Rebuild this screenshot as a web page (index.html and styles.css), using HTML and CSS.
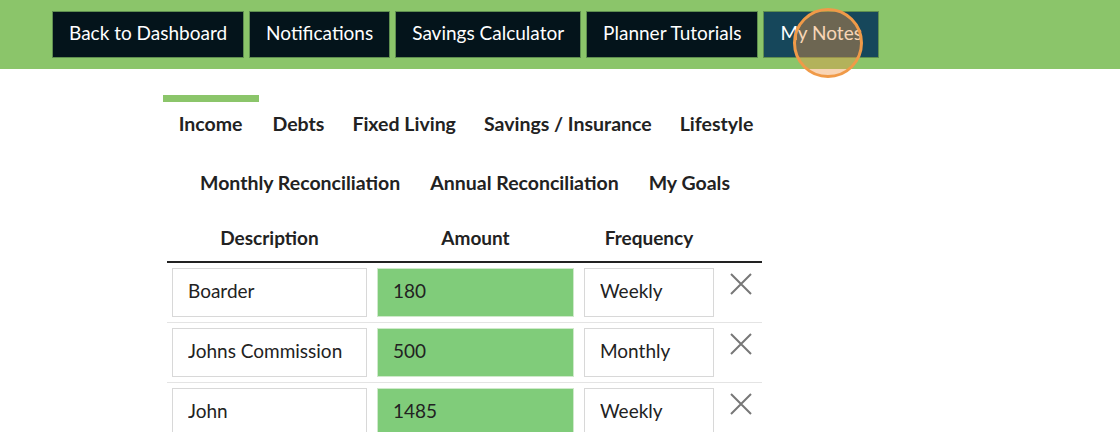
FILE: index.html
```html
<!DOCTYPE html>
<html lang="en">
<head>
    <meta charset="UTF-8">
    <meta name="viewport" content="width=device-width, initial-scale=1.0">
    <title>Budget Planner - Income</title>
    <link rel="stylesheet" href="styles.css">
</head>
<body>

<div class="topbar">
    <a class="top-btn" href="#">Back to Dashboard</a>
    <a class="top-btn" href="#">Notifications</a>
    <a class="top-btn" href="#">Savings Calculator</a>
    <a class="top-btn" href="#">Planner Tutorials</a>
    <a class="top-btn active" href="#">My Notes</a>
    <span class="click-mark"></span>
</div>

<div class="planner">
    <div class="tabs">
        <ul class="tab-row first">
            <li class="tab current">Income</li>
            <li class="tab">Debts</li>
            <li class="tab">Fixed Living</li>
            <li class="tab">Savings / Insurance</li>
            <li class="tab">Lifestyle</li>
        </ul>
        <ul class="tab-row">
            <li class="tab">Monthly Reconciliation</li>
            <li class="tab">Annual Reconciliation</li>
            <li class="tab">My Goals</li>
        </ul>
    </div>

    <table class="items">
        <thead>
            <tr>
                <th class="col-desc">Description</th>
                <th class="col-amount">Amount</th>
                <th class="col-freq">Frequency</th>
                <th class="col-del"></th>
            </tr>
        </thead>
        <tbody>
            <tr>
                <td><input class="field" type="text" value="Boarder"></td>
                <td><input class="field amount" type="text" value="180"></td>
                <td><input class="field" type="text" value="Weekly"></td>
                <td class="del"><svg viewBox="0 0 24 24" width="24" height="24"><path d="M2 2 L22 22 M22 2 L2 22"/></svg></td>
            </tr>
            <tr>
                <td><input class="field" type="text" value="Johns Commission"></td>
                <td><input class="field amount" type="text" value="500"></td>
                <td><input class="field" type="text" value="Monthly"></td>
                <td class="del"><svg viewBox="0 0 24 24" width="24" height="24"><path d="M2 2 L22 22 M22 2 L2 22"/></svg></td>
            </tr>
            <tr>
                <td><input class="field" type="text" value="John"></td>
                <td><input class="field amount" type="text" value="1485"></td>
                <td><input class="field" type="text" value="Weekly"></td>
                <td class="del"><svg viewBox="0 0 24 24" width="24" height="24"><path d="M2 2 L22 22 M22 2 L2 22"/></svg></td>
            </tr>
        </tbody>
    </table>
</div>

</body>
</html>
```

FILE: styles.css
```css
body {
    margin: 0;
    font-family: Lato, "Open Sans", sans-serif;
    color: #222;
    background: #fff;
}
.topbar {
    position: relative;
    display: flex;
    gap: 5px;
    height: 69px;
    padding: 11px 0 0 52px;
    box-sizing: border-box;
    background: #8bc56a;
}
.top-btn {
    display: flex;
    align-items: center;
    height: 47px;
    padding: 0 16px 4px;
    box-sizing: border-box;
    background: #04141b;
    border: 1px solid #5f8f50;
    color: #fff;
    font-size: 19px;
    text-decoration: none;
}
.top-btn.active {
    background: #16475b;
}
.click-mark {
    position: absolute;
    left: 793px;
    top: 8px;
    width: 64px;
    height: 64px;
    border: 3px solid #f09a48;
    border-radius: 50%;
    background: rgba(240, 150, 70, 0.4);
}
.planner {
    width: 604px;
    margin-left: 163px;
    padding-top: 26px;
}
.tab-row {
    display: flex;
    justify-content: center;
    list-style: none;
    margin: 0;
    padding: 0;
    white-space: nowrap;
}
.tab {
    flex: none;
    padding: 0 15px 8px;
    height: 59px;
    line-height: 44px;
    box-sizing: border-box;
    border-top: 7px solid transparent;
    font-size: 19.5px;
    font-weight: bold;
    color: #222;
}
.tab-row.first .tab {
    padding: 0 14px 8px;
}
.tab-row.first .tab.current {
    padding: 0 16px 8px;
    border-top-color: #8bc56a;
}
.items {
    width: 595px;
    margin: 0 0 0 4px;
    border-collapse: collapse;
}
.items th {
    height: 48px;
    padding: 0;
    font-size: 19px;
    font-weight: bold;
    text-align: center;
    vertical-align: middle;
    border-bottom: 2px solid #222;
}
.col-desc { width: 205px; }
.col-amount { width: 207px; }
.col-freq { width: 140px; }
.items td {
    padding: 5px;
    border-bottom: 1px solid #e4e4e4;
    vertical-align: top;
}
.field {
    display: block;
    width: 100%;
    height: 49px;
    box-sizing: border-box;
    padding: 0 15px 4px;
    border: 1px solid #d8d8d8;
    font-family: Lato, sans-serif;
    font-size: 19px;
    color: #222;
    background: #fff;
}
.field.amount {
    background: #80cc7a;
    border-color: #cfe9cb;
}
.del {
    text-align: center;
}
.del svg {
    display: block;
    margin: 4px auto 0;
    stroke: #777;
    stroke-width: 2;
}
```
